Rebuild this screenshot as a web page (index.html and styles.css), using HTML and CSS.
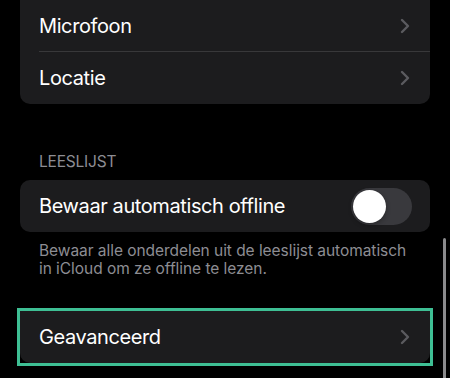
FILE: index.html
```html
<!DOCTYPE html>
<html lang="nl">
<head>
    <meta charset="UTF-8">
    <meta name="viewport" content="width=device-width, initial-scale=1.0">
    <title>Safari instellingen</title>
    <link rel="stylesheet" href="styles.css">
</head>
<body>
    <div class="page">
        <div class="group group-cut">
            <div class="row">
                <span class="row-title">Microfoon</span>
                <svg class="chevron" width="10" height="16" viewBox="0 0 10 16"><polyline points="2,2 8,8 2,14" /></svg>
            </div>
            <div class="separator"></div>
            <div class="row">
                <span class="row-title">Locatie</span>
                <svg class="chevron" width="10" height="16" viewBox="0 0 10 16"><polyline points="2,2 8,8 2,14" /></svg>
            </div>
        </div>

        <div class="section-header">LEESLIJST</div>
        <div class="group">
            <div class="row row-toggle">
                <span class="row-title">Bewaar automatisch offline</span>
                <div class="toggle"><div class="knob"></div></div>
            </div>
        </div>
        <div class="section-footer">Bewaar alle onderdelen uit de leeslijst automatisch in iCloud om ze offline te lezen.</div>

        <div class="highlight">
            <div class="group group-open">
                <div class="row">
                    <span class="row-title">Geavanceerd</span>
                    <svg class="chevron" width="10" height="16" viewBox="0 0 10 16"><polyline points="2,2 8,8 2,14" /></svg>
                </div>
            </div>
        </div>
    </div>
    <div class="scrollbar"></div>
</body>
</html>
```

FILE: styles.css
```css
body {
    margin: 0;
    background-color: #000;
    font-family: Inter, "Noto Sans", "DejaVu Sans", sans-serif;
    color: #fff;
    overflow: hidden;
}
.page {
    padding: 0 20px;
}
.group {
    background-color: #1c1c1e;
    border-radius: 10px;
}
.group-cut {
    border-radius: 0 0 10px 10px;
}
.group-open {
    border-radius: 0 0 10px 10px;
}
.row {
    display: flex;
    align-items: center;
    justify-content: space-between;
    height: 52px;
    padding: 0 20px 0 19px;
}
.group-cut .row:first-child {
    height: 51px;
}
.row-toggle {
    padding-right: 18px;
}
.row-title {
    font-size: 20px;
    letter-spacing: -0.4px;
}
.chevron polyline {
    fill: none;
    stroke: #5b5b5f;
    stroke-width: 2.4;
    stroke-linecap: round;
    stroke-linejoin: round;
}
.separator {
    height: 1px;
    margin-left: 19px;
    background-color: #38383a;
}
.section-header {
    padding: 49px 0 9px 19px;
    font-size: 15.5px;
    line-height: 18px;
    letter-spacing: -0.2px;
    color: #8d8d93;
}
.section-footer {
    padding: 10px 19px 0 19px;
    font-size: 15.5px;
    line-height: 18px;
    letter-spacing: -0.05px;
    color: #8d8d93;
    margin-bottom: 30px;
}
.toggle {
    width: 61px;
    height: 37px;
    border-radius: 19px;
    background-color: #39393d;
    padding: 2px;
    box-sizing: border-box;
}
.knob {
    width: 33px;
    height: 33px;
    border-radius: 50%;
    background-color: #fff;
    box-shadow: 0 2px 5px rgba(0, 0, 0, 0.3);
}
.highlight {
    margin: 0 -3px;
    border: 3px solid #3ebf94;
}
.scrollbar {
    position: absolute;
    left: 443px;
    top: 238px;
    width: 3px;
    height: 150px;
    border-radius: 2px;
    background-color: #8a8a8c;
}
```
